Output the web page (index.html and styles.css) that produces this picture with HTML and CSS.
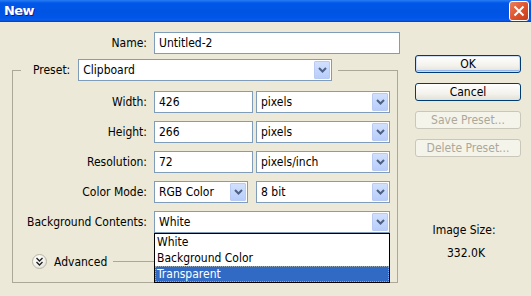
FILE: index.html
```html
<!DOCTYPE html>
<html>
<head>
<meta charset="utf-8">
<link rel="stylesheet" href="styles.css">
</head>
<body>
<div class="window">
  <div class="titlebar">
    <span class="title">New</span>
    <span class="close"><svg width="12" height="12" viewBox="0 0 12 12"><path d="M1.5 1.5 L10.5 10.5 M10.5 1.5 L1.5 10.5" stroke="#fff" stroke-width="2" fill="none"/></svg></span>
  </div>
  <div class="body">
    <div class="main">
      <div class="row name-row">
        <label class="lbl">Name:</label>
        <div class="input wide">Untitled-2</div>
      </div>
      <fieldset class="group">
        <legend class="legend">
          <label class="plbl">Preset:</label>
          <div class="select preset"><span class="val">Clipboard</span><span class="dd"><svg width="9" height="6" viewBox="0 0 9 6"><path d="M1 1 L4.5 4.5 L8 1" stroke="#4d6185" stroke-width="2" fill="none"/></svg></span></div>
        </legend>
        <div class="rows">
          <div class="row">
            <label class="lbl g">Width:</label>
            <div class="input num">426</div>
            <div class="select unit"><span class="val">pixels</span><span class="dd"><svg width="9" height="6" viewBox="0 0 9 6"><path d="M1 1 L4.5 4.5 L8 1" stroke="#4d6185" stroke-width="2" fill="none"/></svg></span></div>
          </div>
          <div class="row">
            <label class="lbl g">Height:</label>
            <div class="input num">266</div>
            <div class="select unit"><span class="val">pixels</span><span class="dd"><svg width="9" height="6" viewBox="0 0 9 6"><path d="M1 1 L4.5 4.5 L8 1" stroke="#4d6185" stroke-width="2" fill="none"/></svg></span></div>
          </div>
          <div class="row">
            <label class="lbl g">Resolution:</label>
            <div class="input num">72</div>
            <div class="select unit"><span class="val">pixels/inch</span><span class="dd"><svg width="9" height="6" viewBox="0 0 9 6"><path d="M1 1 L4.5 4.5 L8 1" stroke="#4d6185" stroke-width="2" fill="none"/></svg></span></div>
          </div>
          <div class="row">
            <label class="lbl g">Color Mode:</label>
            <div class="select mode"><span class="val">RGB Color</span><span class="dd"><svg width="9" height="6" viewBox="0 0 9 6"><path d="M1 1 L4.5 4.5 L8 1" stroke="#4d6185" stroke-width="2" fill="none"/></svg></span></div>
            <div class="select unit after-mode"><span class="val">8 bit</span><span class="dd"><svg width="9" height="6" viewBox="0 0 9 6"><path d="M1 1 L4.5 4.5 L8 1" stroke="#4d6185" stroke-width="2" fill="none"/></svg></span></div>
          </div>
          <div class="row bg-row">
            <label class="lbl g">Background Contents:</label>
            <div class="select bgsel"><span class="val">White</span><span class="dd"><svg width="9" height="6" viewBox="0 0 9 6"><path d="M1 1 L4.5 4.5 L8 1" stroke="#4d6185" stroke-width="2" fill="none"/></svg></span>
              <ul class="list">
                <li>White</li>
                <li>Background Color</li>
                <li class="sel">Transparent</li>
              </ul>
            </div>
          </div>
          <div class="adv-row">
            <span class="adv-btn"><svg width="9" height="9" viewBox="0 0 9 9"><path d="M1.5 1 L4.5 4 L7.5 1 M1.5 5 L4.5 8 L7.5 5" stroke="#222" stroke-width="1.4" fill="none"/></svg></span>
            <span class="adv-txt">Advanced</span>
            <span class="adv-line"></span>
          </div>
        </div>
      </fieldset>
    </div>
    <div class="side">
      <button class="btn default">OK</button>
      <button class="btn">Cancel</button>
      <button class="btn disabled">Save Preset...</button>
      <button class="btn disabled">Delete Preset...</button>
      <div class="size">
        <div class="size-lbl">Image Size:</div>
        <div class="size-val">332.0K</div>
      </div>
    </div>
  </div>
</div>
</body>
</html>
```

FILE: styles.css
```css
* { box-sizing: border-box; }
html, body { margin: 0; padding: 0; }
body {
  width: 531px;
  height: 296px;
  overflow: hidden;
  background: #ece9d8;
  font-family: "DejaVu Sans Condensed", "DejaVu Sans", sans-serif;
  font-size: 12px;
  color: #000;
}
.window { width: 531px; height: 296px; }
.titlebar {
  height: 22px;
  background: linear-gradient(#2a7cf4 0, #0058e8 3px, #0054e3 12px, #0056ea 18px, #0a5de8 20px, #003cc8 22px);
  display: flex;
  align-items: center;
  justify-content: space-between;
  padding: 0 2px 1px 4px;
}
.title {
  color: #fff;
  font-family: "DejaVu Sans", sans-serif;
  font-weight: bold;
  font-size: 13px;
  letter-spacing: -0.6px;
  text-shadow: 1px 1px 0 #0a1e8c;
}
.close {
  width: 20px;
  height: 20px;
  border: 1px solid #fff;
  border-radius: 3px;
  background: linear-gradient(135deg, #e9835f, #e0542d 50%, #c43d18);
  display: flex;
  align-items: center;
  justify-content: center;
  margin-top: 1px;
}
.body { display: flex; }
.main { width: 400px; padding-top: 10px; }
.row { display: flex; align-items: center; height: 22px; }
.lbl { width: 148px; text-align: right; padding-right: 1px; }
.lbl.g { width: 135px; }
.input, .select {
  height: 22px;
  border: 1px solid #7f9db9;
  background: #fff;
  display: flex;
  align-items: center;
  padding-left: 4px;
}
.name-row .input { margin-left: 6px; width: 246px; }
.input.num { margin-left: 6px; width: 99px; }
.select { position: relative; justify-content: space-between; padding-right: 1px; }
.select.unit { margin-left: 3px; width: 134px; }
.select.unit.after-mode { margin-left: 8px; }
.select.mode { margin-left: 6px; width: 94px; }
.select.bgsel { margin-left: 6px; width: 236px; }
.select.preset { width: 254px; margin-left: 8px; }
.dd {
  width: 16px;
  height: 18px;
  border: 1px solid #b9cbf3;
  border-radius: 1px;
  background: linear-gradient(#d2e0fd, #b7cdfb);
  display: flex;
  align-items: center;
  justify-content: center;
}
.group {
  margin: 5px 0 0 12px;
  width: 386px;
  height: 224px;
  border: 1px solid #aca899;
  padding: 0;
  min-width: 0;
}
.legend {
  display: flex;
  align-items: center;
  padding: 0 6px 0 12px;
  margin-left: 8px;
  height: 22px;
}
.rows { display: flex; flex-direction: column; gap: 8px; padding-top: 10px; }
.list {
  position: absolute;
  left: -1px;
  top: 21px;
  width: 236px;
  margin: 0;
  padding: 0;
  list-style: none;
  background: #fff;
  border: 1px solid #000;
  z-index: 2;
}
.list li { height: 16px; line-height: 16px; padding-left: 2px; }
.list li.sel { background: #316ac5; color: #fff; outline: 1px dotted #9ab; outline-offset: -1px; }
.adv-row { display: flex; align-items: center; margin-top: 13px; padding-left: 19px; }
.adv-btn {
  width: 15px; height: 15px;
  border-radius: 50%;
  border: 1px solid #b9b6a8;
  background: radial-gradient(circle at 40% 35%, #fff 0, #f4f3ee 50%, #d6d3c6 100%);
  display: flex; align-items: center; justify-content: center;
}
.adv-txt { margin-left: 7px; }
.adv-line { margin-left: 6px; width: 42px; height: 1px; background: #aca899; }
.side {
  padding: 33px 0 0 15px;
  display: flex;
  flex-direction: column;
  align-items: flex-start;
}
.btn {
  width: 106px;
  height: 18px;
  margin-bottom: 10px;
  font-family: inherit;
  font-size: 12px;
  color: #000;
  border: 1px solid #003c74;
  border-radius: 3px;
  background: linear-gradient(#fff, #f3f2ec 60%, #e3e1d6);
  padding: 0;
  line-height: 15px;
}
.btn.default { box-shadow: inset 0 0 0 1px #cedcf6, inset 0 -1px 0 1px #94b5ee; }
.btn.disabled { color: #aca899; border-color: #c9c7ba; background: #f5f4ea; }
.size { align-self: stretch; text-align: center; padding-top: 56px; padding-right: 8px; }
.size-val { margin-top: 9px; padding-left: 4px; }
```
